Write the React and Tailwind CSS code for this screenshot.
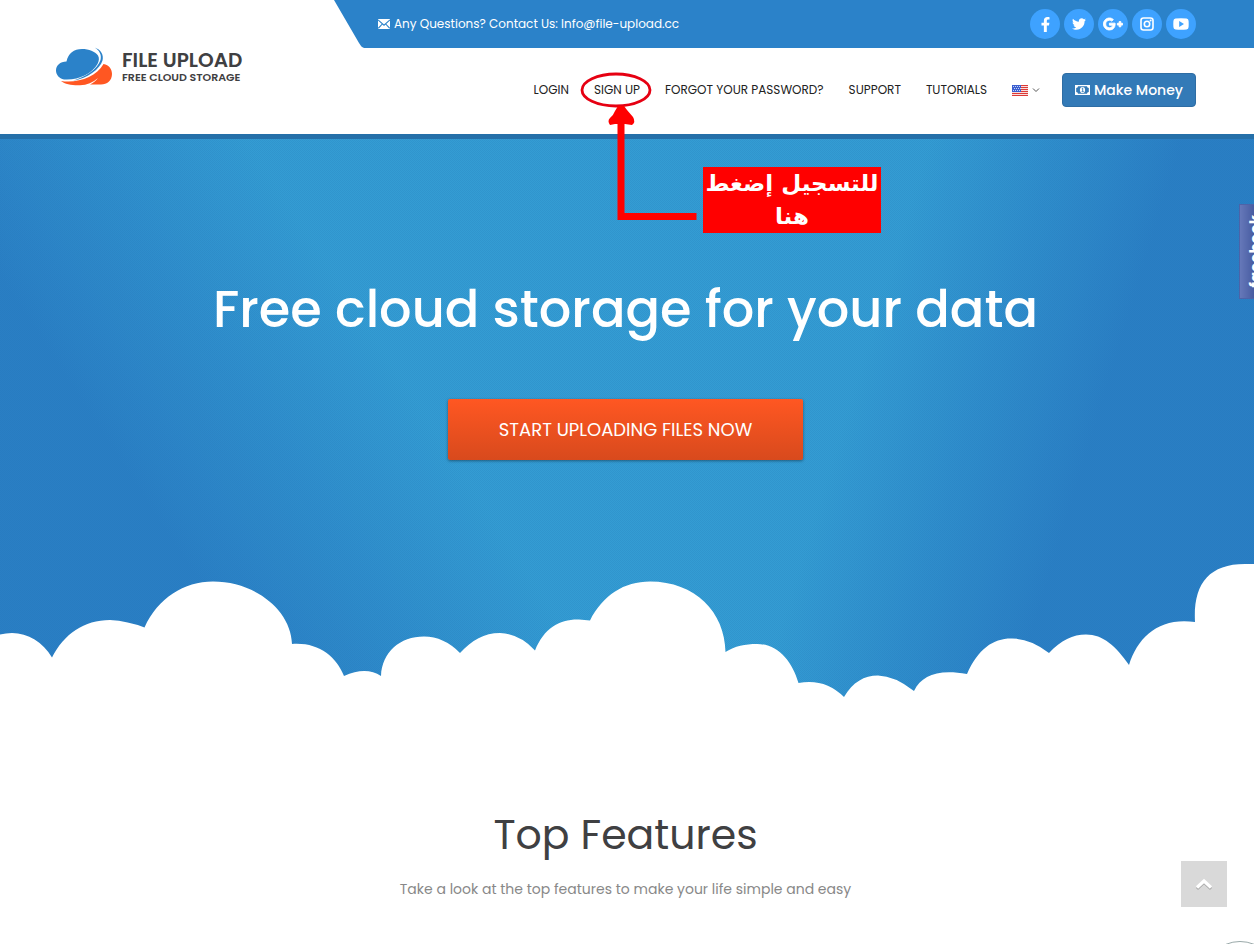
import React from "react";
import { FaFacebookF, FaTwitter, FaGooglePlusG } from "react-icons/fa";

function InstagramIcon() {
  return (
    <svg viewBox="0 0 14 14" className="size-[14px]" aria-hidden="true">
      <rect x="1" y="1" width="12" height="12" rx="2.500" fill="none" stroke="currentColor" strokeWidth="1.600" />
      <circle cx="7" cy="7" r="2.700" fill="none" stroke="currentColor" strokeWidth="1.600" />
      <circle cx="10.600" cy="3.500" r="1" fill="currentColor" />
    </svg>
  );
}

function YoutubeIcon() {
  return (
    <svg viewBox="0 0 16 12" className="h-[12px] w-[16px]" aria-hidden="true">
      <path
        fillRule="evenodd"
        fill="currentColor"
        d="M2.5.5Q8 0 13.5.5Q15.5.8 15.6 3Q15.8 6 15.6 9Q15.5 11.2 13.5 11.5Q8 12 2.5 11.5Q.5 11.2.4 9Q.2 6 .4 3Q.5.8 2.5.5ZM6.2 3V9L11 6Z"
      />
    </svg>
  );
}

const socials = [
  { name: "Facebook", icon: <FaFacebookF size={15} /> },
  { name: "Twitter", icon: <FaTwitter size={14} /> },
  { name: "Google Plus", icon: <FaGooglePlusG size={20} stroke="currentColor" strokeWidth={28} /> },
  { name: "Instagram", icon: <InstagramIcon /> },
  { name: "YouTube", icon: <YoutubeIcon /> },
];

function Logo() {
  return (
    <a href="#" className="flex items-center gap-2 text-[#3f4042]">
      <svg viewBox="0 0 58 40" className="h-[40px] w-[58px] shrink-0" aria-hidden="true">
        <path
          fill="#ff5722"
          d="M5 34C22 36.500 40 30 47.500 17C53 18 56 22 56 27C56 33.500 51 37.500 45 37.500H34C37 36 40 34 42 31C37 35.500 31 38 24 38.300C16 38.500 9 37.500 5 34Z"
        />
        <path
          fill="#2b82c9"
          d="M8 32.500C3 31.500 0 27.500 0 23.500C0 18.500 4 14.500 10.500 14.500C12 6.500 18 2 26 2C33 2 39 4.500 42 8.500C43.500 11 43 14 41.500 17C36 27 22 33.500 8 32.500Z"
        />
        <path fill="#2b82c9" d="M38.500 .5C45 2.500 48 8 46.500 13.500C44 22 32 31 17 33.800C30 29.500 41.500 22 44.500 13C46 7.500 43 3 38.500 .5Z" />
      </svg>
      <span className="flex flex-col font-semibold">
        <span className="text-[20px] leading-[20px]">FILE UPLOAD</span>
        <span className="text-[11px] leading-[14px]">FREE CLOUD STORAGE</span>
      </span>
    </a>
  );
}

function EnvelopeIcon() {
  return (
    <svg viewBox="0 0 12 10" className="h-[10px] w-[12px]" aria-hidden="true">
      <rect width="12" height="10" fill="#fff" />
      <path d="M0 .8L6 6.200L12 .8M.3 9.300L4.300 5M11.700 9.300L7.700 5" fill="none" stroke="#2b82c9" strokeWidth="1.100" />
    </svg>
  );
}

function MoneyIcon() {
  return (
    <svg viewBox="0 0 15 10" className="h-[10px] w-[15px]" aria-hidden="true">
      <path fill="currentColor" fillRule="evenodd" d="M0 0H15V10H0ZM3 1.200Q3 3 1.200 3V7Q3 7 3 8.800H12Q12 7 13.800 7V3Q12 3 12 1.200Z" />
      <ellipse cx="7.500" cy="5" rx="2.600" ry="3.100" fill="currentColor" />
      <path d="M6.800 3.700L7.700 3.100V6.600M6.600 6.700H8.800" fill="none" stroke="#337ab7" strokeWidth=".9" />
    </svg>
  );
}

function Flag() {
  return (
    <svg viewBox="0 0 16 11" className="h-[11px] w-[16px]" aria-hidden="true">
      <rect width="16" height="11" fill="#f8dcdc" />
      <path d="M0 .5H16M0 2.500H16M0 4.500H16M0 6.500H16M0 8.500H16M0 10.500H16" stroke="#dc3a36" />
      <rect width="9" height="7" fill="#3c5fd0" />
      <path d="M1 1.500H8M2 3.500H9M1 5.500H8" stroke="#c5d4f5" strokeDasharray="1 1" />
    </svg>
  );
}

function SignUpNote() {
  return (
    <div className="pointer-events-none absolute left-1/2 top-1/2 z-20 -ml-[38px] h-[164px] w-[304px] -translate-y-[19px]">
      <svg viewBox="0 0 120 152" className="absolute left-0 top-0 h-[152px] w-[120px]" aria-hidden="true">
        <ellipse cx="37" cy="19" rx="34" ry="16" fill="none" stroke="#e60012" strokeWidth="2.800" />
        <path d="M42 52V145.500H117.500" fill="none" stroke="#f00" strokeWidth="7" />
        <path d="M39 35H45L48 39L54 46Q57 51 53 54L46 53H36L31 54Q28 50 31 47Q34 45 36 40Z" fill="#f00" />
      </svg>
      <p
        dir="rtl"
        lang="ar"
        className="absolute left-[124px] top-[96px] h-[66px] w-[178px] whitespace-nowrap bg-[#ff0000] text-center font-['DejaVu_Sans',sans-serif] text-[23px] font-bold leading-[33px] text-white"
      >
        للتسجيل إضغط
        <br />
        هنا
      </p>
    </div>
  );
}

function Clouds() {
  return (
    <svg viewBox="0 0 1254 140" preserveAspectRatio="none" className="block h-[140px] w-full" aria-hidden="true">
      <path
        fill="#fff"
        d="M0 74.500Q6 73 12 73C28 73 43 82 52 97.500C64 74 84 60 110 60Q128 61 144.500 67.500C158 38 184 21.500 213 21.500C255 21.500 291 50 292 84C318 82 336 96 344 116Q366 106 381 116C382 92 400 76.500 424 76.500Q444 76.500 460 93C472 80 484 73 500 73Q520 74 535 90.500C544 68 560 59 579 59.500L590 60.500C603 35 624 21.500 650 21.500C695 21.500 725 52 725.500 92C735 86 745 84 757 84C778 84 792 101 798.500 123Q825 118 844 137C853 122 864 115.500 878 115.500Q895 116 914 131C922 115 938 109 967 114C978 89 993 78.500 1011 78.500Q1030 78 1049 93C1061 80 1073 74.500 1086 74.500C1103 74.500 1116 86 1129 105C1138 76 1160 57 1195 62C1193 25 1208 4 1245 4H1254V140H0Z"
      />
    </svg>
  );
}

function Header() {
  const link = "text-[12px] leading-[34px] text-[#222] whitespace-nowrap";
  return (
    <header className="relative flex h-[134px] bg-white">
      <div className="w-[334px] shrink-0 pl-14 pt-[47px]">
        <Logo />
      </div>
      <div className="flex min-w-0 flex-1 flex-col">
        <div className="flex h-12">
          <svg viewBox="0 0 32 48" className="h-12 w-8 shrink-0" aria-hidden="true">
            <path d="M0 0H32V48C28 48 27 46 25 43Z" fill="#2b82c9" />
          </svg>
          <div className="flex flex-1 items-center justify-between bg-[#2b82c9] pl-3 pr-[58px]">
            <a href="#" className="flex items-center gap-1 text-[12px] text-white">
              <EnvelopeIcon />
              Any Questions? Contact Us: Info@file-upload.cc
            </a>
            <div className="flex gap-1">
              {socials.map((s) => (
                <a
                  key={s.name}
                  href="#"
                  aria-label={s.name}
                  className="flex size-[30px] items-center justify-center rounded-full bg-[#3ea2ff] text-white"
                >
                  {s.icon}
                </a>
              ))}
            </div>
          </div>
        </div>
        <nav className="flex items-center justify-end gap-[25px] pr-[58px] pt-[25px]">
          <a href="#" className={link}>LOGIN</a>
          <div className="relative">
            <a href="#" className={link}>SIGN UP</a>
            <SignUpNote />
          </div>
          <a href="#" className={link}>FORGOT YOUR PASSWORD?</a>
          <a href="#" className={link}>SUPPORT</a>
          <a href="#" className={link}>TUTORIALS</a>
          <div className="flex items-center gap-[22px]">
            <button type="button" aria-label="Language" className="flex items-center gap-1 text-[#555]">
              <Flag />
              <svg viewBox="0 0 8 6" className="h-[6px] w-[8px]" aria-hidden="true">
                <path d="M1 1.500L4 4.500L7 1.500" fill="none" stroke="currentColor" />
              </svg>
            </button>
            <button
              type="button"
              className="flex h-[34px] items-center gap-1 whitespace-nowrap rounded border border-[#2e6da4] bg-[#337ab7] px-3 text-[14px] font-medium text-white"
            >
              <MoneyIcon />
              Make Money
            </button>
          </div>
        </nav>
      </div>
    </header>
  );
}

export default function App() {
  return (
    <div className="min-h-screen overflow-x-hidden bg-white font-['Poppins',Inter,sans-serif]">
      <Header />
      <main>
        <section className="relative border-t-[5px] border-[#2570a9] bg-[#349dd3] bg-[repeating-conic-gradient(#1f70b630_0_25%,transparent_0_50%),linear-gradient(57deg,#2a7fc4_17%,#2a7fc400_38%),linear-gradient(287deg,#2a7fc4_17%,#2a7fc400_35%)] bg-[length:2px_2px,100%_100%,100%_100%] bg-clip-padding">
          <div className="flex flex-col items-center pr-[3px] pt-[134px]">
            <h1 className="text-center text-[51px] font-medium leading-[72px] text-white">
              Free cloud storage for your data
            </h1>
            <button
              type="button"
              className="mt-[54px] h-[61px] w-[355px] rounded-xs bg-linear-to-b from-[#ff5722] to-[#d84a1d] text-[18px] text-white shadow-[0_1px_3px_#0006]"
            >
              START UPLOADING FILES NOW
            </button>
          </div>
          <div className="pt-[100px]">
            <Clouds />
          </div>
          <a
            href="#"
            className="absolute right-0 top-[65px] flex h-[95px] w-[15px] items-center overflow-hidden border border-r-0 border-[#4d63a8] bg-linear-to-r from-[#6678b9] to-[#475ca1] pl-[6px]"
          >
            <span className="rotate-180 text-[15px] font-bold leading-[20px] text-white [writing-mode:vertical-rl]">
              facebook
            </span>
          </a>
        </section>
        <section className="pb-10 pr-[3px] pt-[104px] text-center">
          <h2 className="text-[41px] leading-[62px] text-[#3f4042]">Top Features</h2>
          <p className="mt-[12px] text-[14px] leading-[22px] text-[#888]">
            Take a look at the top features to make your life simple and easy
          </p>
        </section>
      </main>
      <button
        type="button"
        aria-label="Back to top"
        className="fixed bottom-[37px] right-[27px] flex size-[46px] items-center justify-center bg-[#d9d9d9]"
      >
        <svg viewBox="0 0 18 14" className="h-[14px] w-[18px]" aria-hidden="true">
          <path d="M2 12L9 5.500L16 12" fill="none" stroke="#aaa" strokeWidth="3" />
          <path d="M2 10.500L9 4L16 10.500" fill="none" stroke="#fff" strokeWidth="3.200" />
        </svg>
      </button>
      <div className="fixed -bottom-[71px] -right-[23px] size-[74px] rounded-full border border-[#9aa9a9] bg-white" />
    </div>
  );
}
